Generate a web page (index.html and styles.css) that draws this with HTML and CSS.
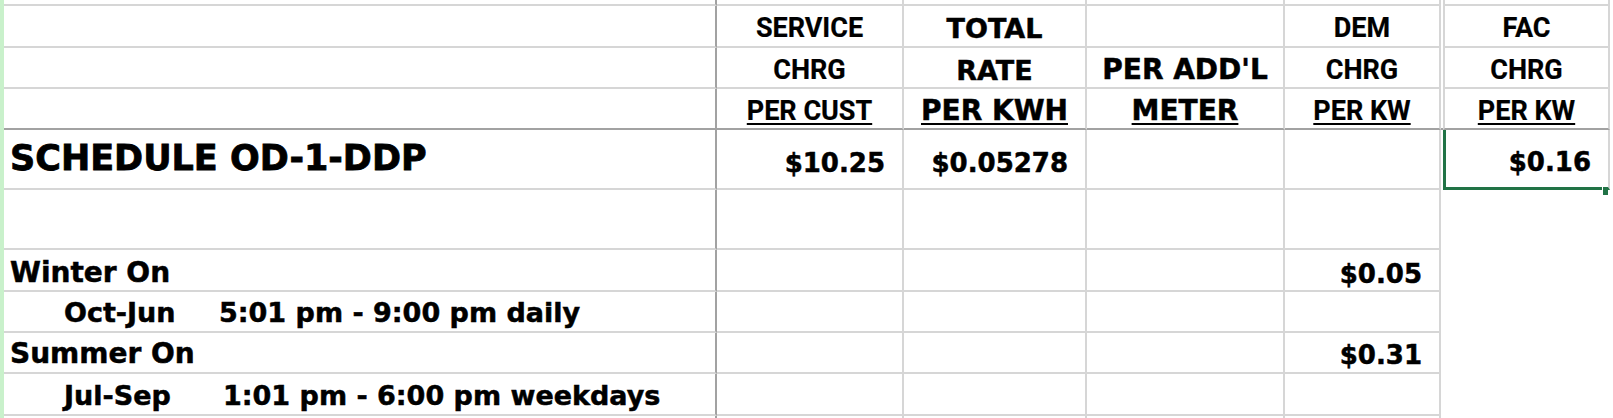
FILE: index.html
```html
<!DOCTYPE html>
<html>
<head>
<meta charset="utf-8">
<link rel="stylesheet" href="styles.css">
</head>
<body>
<div class="sheet">
  <div class="row r0">
    <div class="c a"></div><div class="c"></div><div class="c"></div><div class="c"></div><div class="c"></div><div class="gap"></div><div class="c f"></div>
  </div>
  <div class="row r1">
    <div class="c a"></div>
    <div class="c ctr"><span class="hn">SERVICE</span></div>
    <div class="c ctr"><span class="hw">TOTAL</span></div>
    <div class="c ctr"></div>
    <div class="c ctr"><span class="hn">DEM</span></div>
    <div class="gap"></div>
    <div class="c f ctr"><span class="hn">FAC</span></div>
  </div>
  <div class="row r2">
    <div class="c a"></div>
    <div class="c ctr"><span class="hn">CHRG</span></div>
    <div class="c ctr"><span class="hw">RATE</span></div>
    <div class="c ctr"><span class="hw big">PER ADD'L</span></div>
    <div class="c ctr"><span class="hn">CHRG</span></div>
    <div class="gap"></div>
    <div class="c f ctr"><span class="hn">CHRG</span></div>
  </div>
  <div class="row r3">
    <div class="c a"></div>
    <div class="c ctr"><span class="hn u">PER CUST</span></div>
    <div class="c ctr"><span class="hw big u">PER KWH</span></div>
    <div class="c ctr"><span class="hw big u">METER</span></div>
    <div class="c ctr"><span class="hn u">PER KW</span></div>
    <div class="gap"></div>
    <div class="c f ctr"><span class="hn u">PER KW</span></div>
  </div>
  <div class="row r4">
    <div class="c a"><span class="sched">SCHEDULE OD-1-DDP</span></div>
    <div class="c num"><span class="val">$10.25</span></div>
    <div class="c num"><span class="val">$0.05278</span></div>
    <div class="c"></div>
    <div class="c"></div>
    <div class="gap"></div>
    <div class="c f num sel"><span class="val">$0.16</span><span class="handle"></span></div>
  </div>
  <div class="row r5">
    <div class="c a"></div><div class="c"></div><div class="c"></div><div class="c"></div><div class="c"></div>
  </div>
  <div class="row r6">
    <div class="c a"><span class="lbl">Winter On</span></div>
    <div class="c"></div><div class="c"></div><div class="c"></div>
    <div class="c num"><span class="val">$0.05</span></div>
  </div>
  <div class="row r7">
    <div class="c a"><span class="tm"><span class="mon">Oct-Jun</span>5:01 pm - 9:00 pm daily</span></div>
    <div class="c"></div><div class="c"></div><div class="c"></div><div class="c"></div>
  </div>
  <div class="row r8">
    <div class="c a"><span class="lbl">Summer On</span></div>
    <div class="c"></div><div class="c"></div><div class="c"></div>
    <div class="c num"><span class="val">$0.31</span></div>
  </div>
  <div class="row r9">
    <div class="c a"><span class="tm"><span class="mon mon2">Jul-Sep</span>1:01 pm - 6:00 pm weekdays</span></div>
    <div class="c"></div><div class="c"></div><div class="c"></div><div class="c"></div>
  </div>
  <div class="row r10">
    <div class="c a"></div><div class="c"></div><div class="c"></div><div class="c"></div><div class="c"></div>
  </div>
</div>
</body>
</html>
```

FILE: styles.css
```css
html, body {
  margin: 0;
  padding: 0;
  background: #ffffff;
  overflow: hidden;
}

.sheet {
  width: 1610px;
  height: 418px;
  box-sizing: border-box;
  border-left: 4px solid #c9f1cb;
  overflow: hidden;
}

.row {
  display: grid;
  grid-template-columns: 713px 187px 183px 198px 156px 2px 167px;
}

.r0 { height: 6px; }
.r1 { height: 42px; }
.r2, .r3 { height: 41px; }
.r4, .r5 { height: 60px; }
.r6 { height: 42px; }
.r7, .r8 { height: 41px; }
.r9 { height: 42px; }
.r10 { height: 10px; }

.c {
  box-sizing: border-box;
  border-right: 2px solid #d6d6d6;
  border-bottom: 2px solid #d6d6d6;
  display: flex;
  align-items: flex-end;
  padding: 0 6px 4px 6px;
  white-space: pre;
  line-height: 1;
  color: #000;
  min-width: 0;
  -webkit-text-stroke: 0.5px #000;
}

.c.a { border-right-color: #a2a2a2; }
.r0 .c { padding: 0; }

.r2 .c, .r3 .c { padding-bottom: 3px; }
.r3 .c { border-bottom-color: #a2a2a2; }
.r3 .gap { border-bottom: 2px solid #a2a2a2; }
.r4 .c { padding-bottom: 12px; }
.r6 .c { padding-bottom: 3px; }
.r7 .c, .r9 .c { padding-bottom: 5px; }
.r8 .c { padding-bottom: 4px; }

.c.f { border-left: 2px solid #d6d6d6; }

.ctr { justify-content: center; }
.num { justify-content: flex-end; padding-right: 17px; }

.sel {
  position: relative;
  border-left: 3px solid #217346 !important;
  border-bottom: 3px solid #217346 !important;
}

.handle {
  position: absolute;
  right: 0;
  bottom: -8px;
  width: 5px;
  height: 8px;
  background: #217346;
  border-left: 1px solid #ffffff;
}

.hn {
  font-family: Roboto, "Liberation Sans", sans-serif;
  font-weight: 700;
  font-size: 27px;
  -webkit-text-stroke: 0.2px #000;
}

.hw {
  font-family: "DejaVu Sans", sans-serif;
  font-weight: 700;
  font-size: 27px;
}

.hw.big { font-size: 28px; }

.u {
  text-decoration: underline;
  text-decoration-thickness: 2px;
  text-underline-offset: 3px;
}

.val {
  font-family: "DejaVu Sans", sans-serif;
  font-weight: 700;
  font-size: 26px;
}

.sched {
  font-family: "DejaVu Sans", sans-serif;
  font-weight: 700;
  font-size: 35px;
  -webkit-text-stroke: 0.8px #000;
}

.lbl {
  font-family: "DejaVu Sans", sans-serif;
  font-weight: 700;
  font-size: 28px;
}

.tm {
  font-family: "DejaVu Sans", sans-serif;
  font-weight: 700;
  font-size: 27px;
  padding-left: 54px;
}

.mon {
  display: inline-block;
  width: 155px;
}

.mon2 { width: 159px; }
```
